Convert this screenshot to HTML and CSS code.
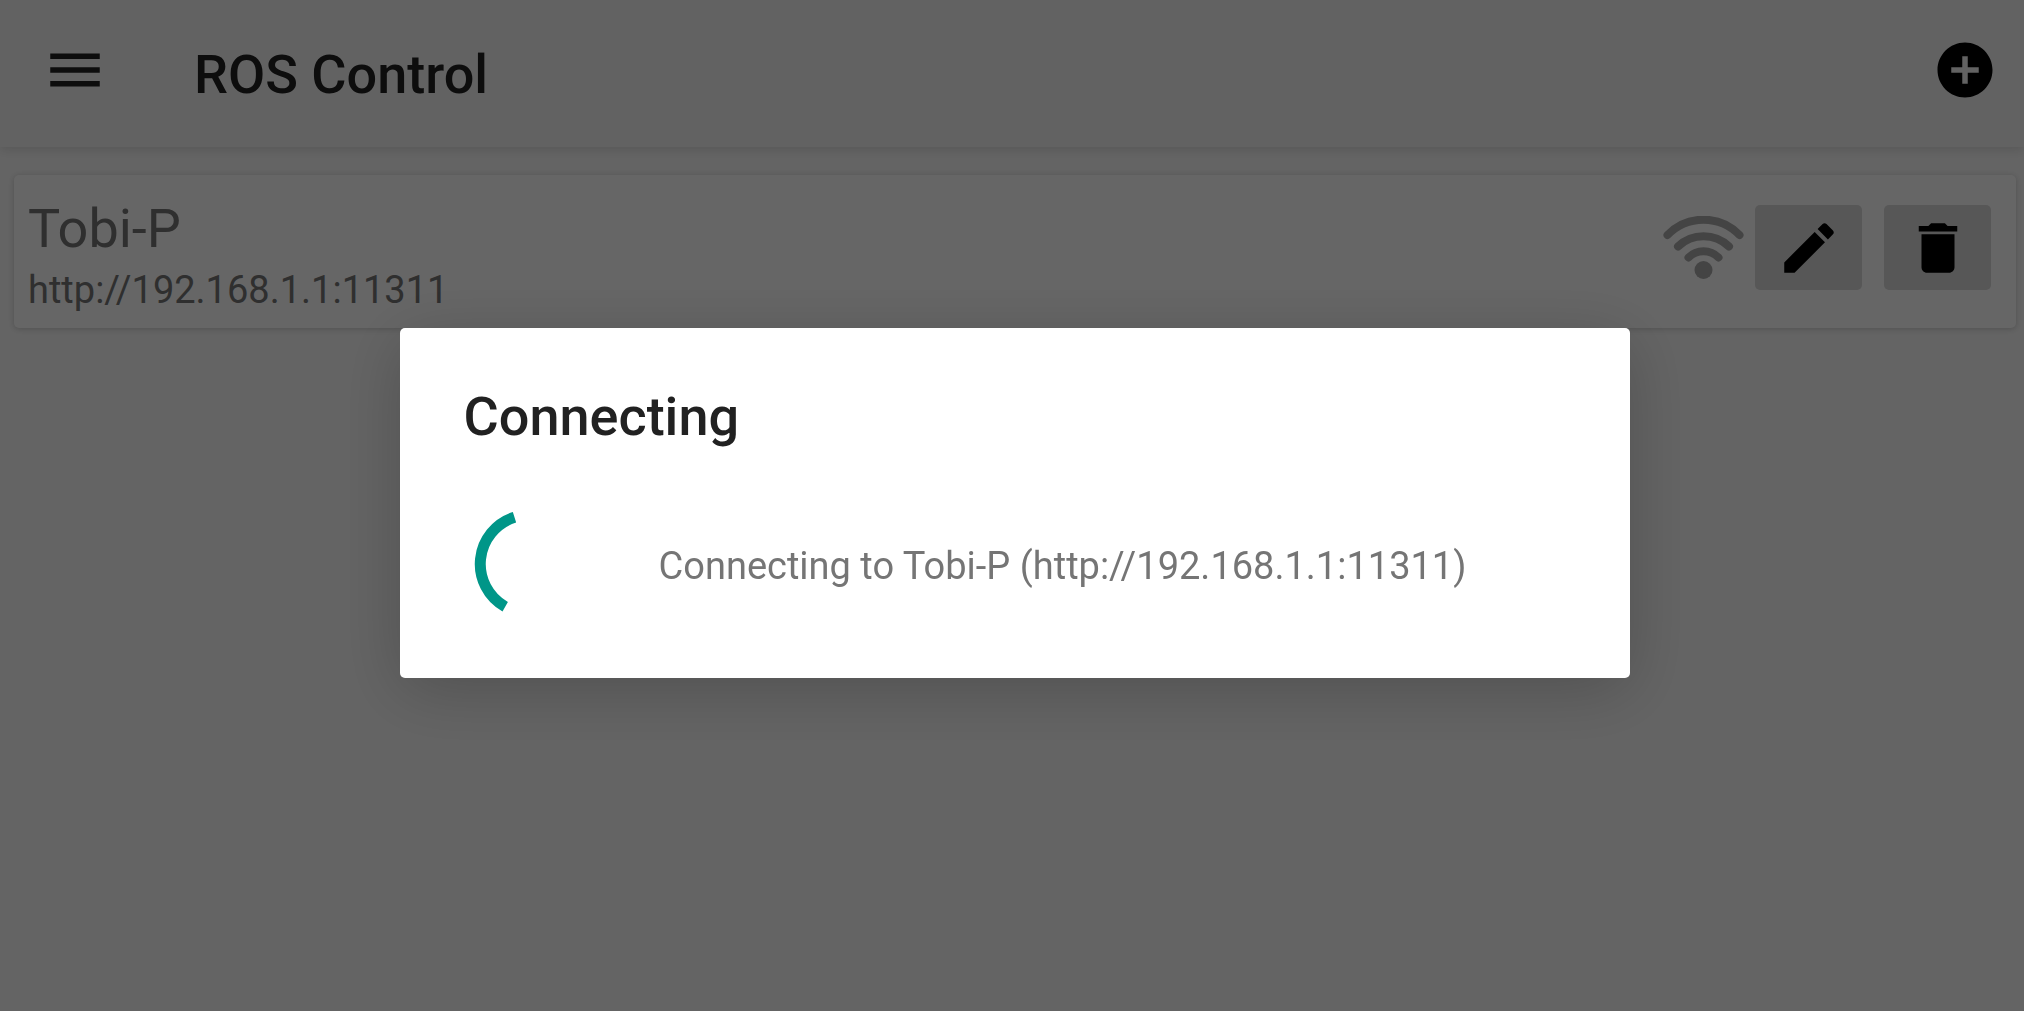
FILE: index.html
```html
<!DOCTYPE html>
<html lang="en">
<head>
    <meta charset="UTF-8">
    <meta name="viewport" content="width=device-width, initial-scale=1.0">
    <title>ROS Control</title>
    <link rel="stylesheet" href="styles.css">
</head>
<body>
    <header class="toolbar">
        <button type="button" class="icon-button" aria-label="Open menu">
            <svg class="icon" viewBox="0 0 24 24"><path d="M3 18h18v-2H3v2zm0-5h18v-2H3v2zm0-7v2h18V6H3z"/></svg>
        </button>
        <h1>ROS Control</h1>
        <button type="button" class="icon-button add-button" aria-label="Add robot">
            <svg class="icon" viewBox="0 0 24 24"><path d="M12 2C6.48 2 2 6.48 2 12s4.48 10 10 10 10-4.48 10-10S17.52 2 12 2zm5 11h-4v4h-2v-4H7v-2h4V7h2v4h4v2z"/></svg>
        </button>
    </header>

    <main>
        <article class="card">
            <div class="robot-info">
                <h2>Tobi-P</h2>
                <p>http://192.168.1.1:11311</p>
            </div>
            <div class="robot-actions">
                <svg class="wifi" viewBox="0 0 81 63">
                    <path d="M4.5 19A50 50 0 0 1 76.5 19"/>
                    <path d="M15 30.5A37 37 0 0 1 66 30.5"/>
                    <path d="M25.5 41.5A21 21 0 0 1 55.5 41.5"/>
                    <circle cx="40.5" cy="54" r="9"/>
                </svg>
                <button type="button" class="action-button" aria-label="Edit">
                    <svg class="icon" viewBox="0 0 24 24"><path d="M3 17.25V21h3.75L17.81 9.94l-3.75-3.75L3 17.25zM20.71 7.04c.39-.39.39-1.02 0-1.41l-2.34-2.34c-.39-.39-1.02-.39-1.41 0l-1.83 1.83 3.75 3.75 1.83-1.83z"/></svg>
                </button>
                <button type="button" class="action-button" aria-label="Delete">
                    <svg class="icon" viewBox="0 0 24 24"><path d="M6 19c0 1.1.9 2 2 2h8c1.1 0 2-.9 2-2V7H6v12zM19 4h-3.5l-1-1h-5l-1 1H5v2h14V4z"/></svg>
                </button>
            </div>
        </article>
    </main>

    <div class="overlay">
        <div class="dialog" role="dialog" aria-modal="true" aria-labelledby="dialogTitle">
            <h2 id="dialogTitle">Connecting</h2>
            <div class="progress">
                <svg class="spinner" viewBox="0 0 132 132"><path d="M50.5 19.3A49 49 0 0 0 41.2 108.7"/></svg>
                <p>Connecting to Tobi-P (http://192.168.1.1:11311)</p>
            </div>
        </div>
    </div>
</body>
</html>
```

FILE: styles.css
```css
* {
    box-sizing: border-box;
}
body {
    font-family: Roboto, sans-serif;
    font-size: 38px;
    line-height: 45px;
    background-color: #fafafa;
    color: #757575;
    margin: 0;
    min-height: 100vh;
}
h1, h2, p {
    margin: 0;
}
h1, h2 {
    font-size: 54px;
    line-height: 65px;
    font-weight: 500;
    color: #212121;
}
button {
    border: none;
    padding: 0;
    cursor: pointer;
}
.icon {
    display: block;
    width: 66px;
    height: 66px;
}

/* Toolbar */
.toolbar {
    display: flex;
    align-items: center;
    height: 147px;
    padding: 0 26px 0 42px;
    background-color: #f5f5f5;
    box-shadow: 0 3px 10px rgba(0, 0, 0, 0.12);
}
.toolbar h1 {
    margin-left: 86px;
    padding-top: 1px;
}
.icon-button {
    background: none;
    padding-bottom: 7px;
}
.icon-button:first-child .icon {
    fill: #212121;
}
.add-button {
    margin-left: auto;
}

/* Robot list */
main {
    padding: 28px 8px 0 14px;
}
.card {
    display: flex;
    align-items: center;
    justify-content: space-between;
    padding: 0 25px 0 14px;
    background-color: #fff;
    border-radius: 5px;
    box-shadow: 0 1px 6px rgba(0, 0, 0, 0.2);
}
.robot-info {
    padding: 21px 0 15px;
}
.robot-info h2 {
    margin-bottom: 7px;
    font-weight: 400;
    color: #757575;
}
.robot-actions {
    display: flex;
    align-items: center;
    padding-bottom: 8px;
}
.wifi {
    width: 81px;
    height: 63px;
    margin-right: 11px;
    fill: #aaa;
}
.wifi path {
    fill: none;
    stroke: #aaa;
    stroke-width: 8;
    stroke-linecap: round;
}
.action-button {
    display: flex;
    align-items: center;
    justify-content: center;
    width: 107px;
    height: 85px;
    background-color: #d9d9d9;
    border-radius: 5px;
}
.action-button + .action-button {
    margin-left: 22px;
}

/* Connecting dialog */
.overlay {
    position: fixed;
    inset: 0;
    display: flex;
    align-items: center;
    justify-content: center;
    padding: 0 0 5px 6px;
    background-color: rgba(0, 0, 0, 0.6);
}
.dialog {
    width: 61%;
    padding: 56px 64px 48px;
    background-color: #fff;
    border-radius: 5px;
    box-shadow: 0 12px 66px rgba(0, 0, 0, 0.2);
}
.progress {
    display: flex;
    align-items: center;
    gap: 63px;
    margin-top: 49px;
}
.progress p {
    padding-top: 4px;
}
.spinner {
    flex: none;
    width: 132px;
    height: 132px;
}
.spinner path {
    fill: none;
    stroke: #009688;
    stroke-width: 11;
}
```
